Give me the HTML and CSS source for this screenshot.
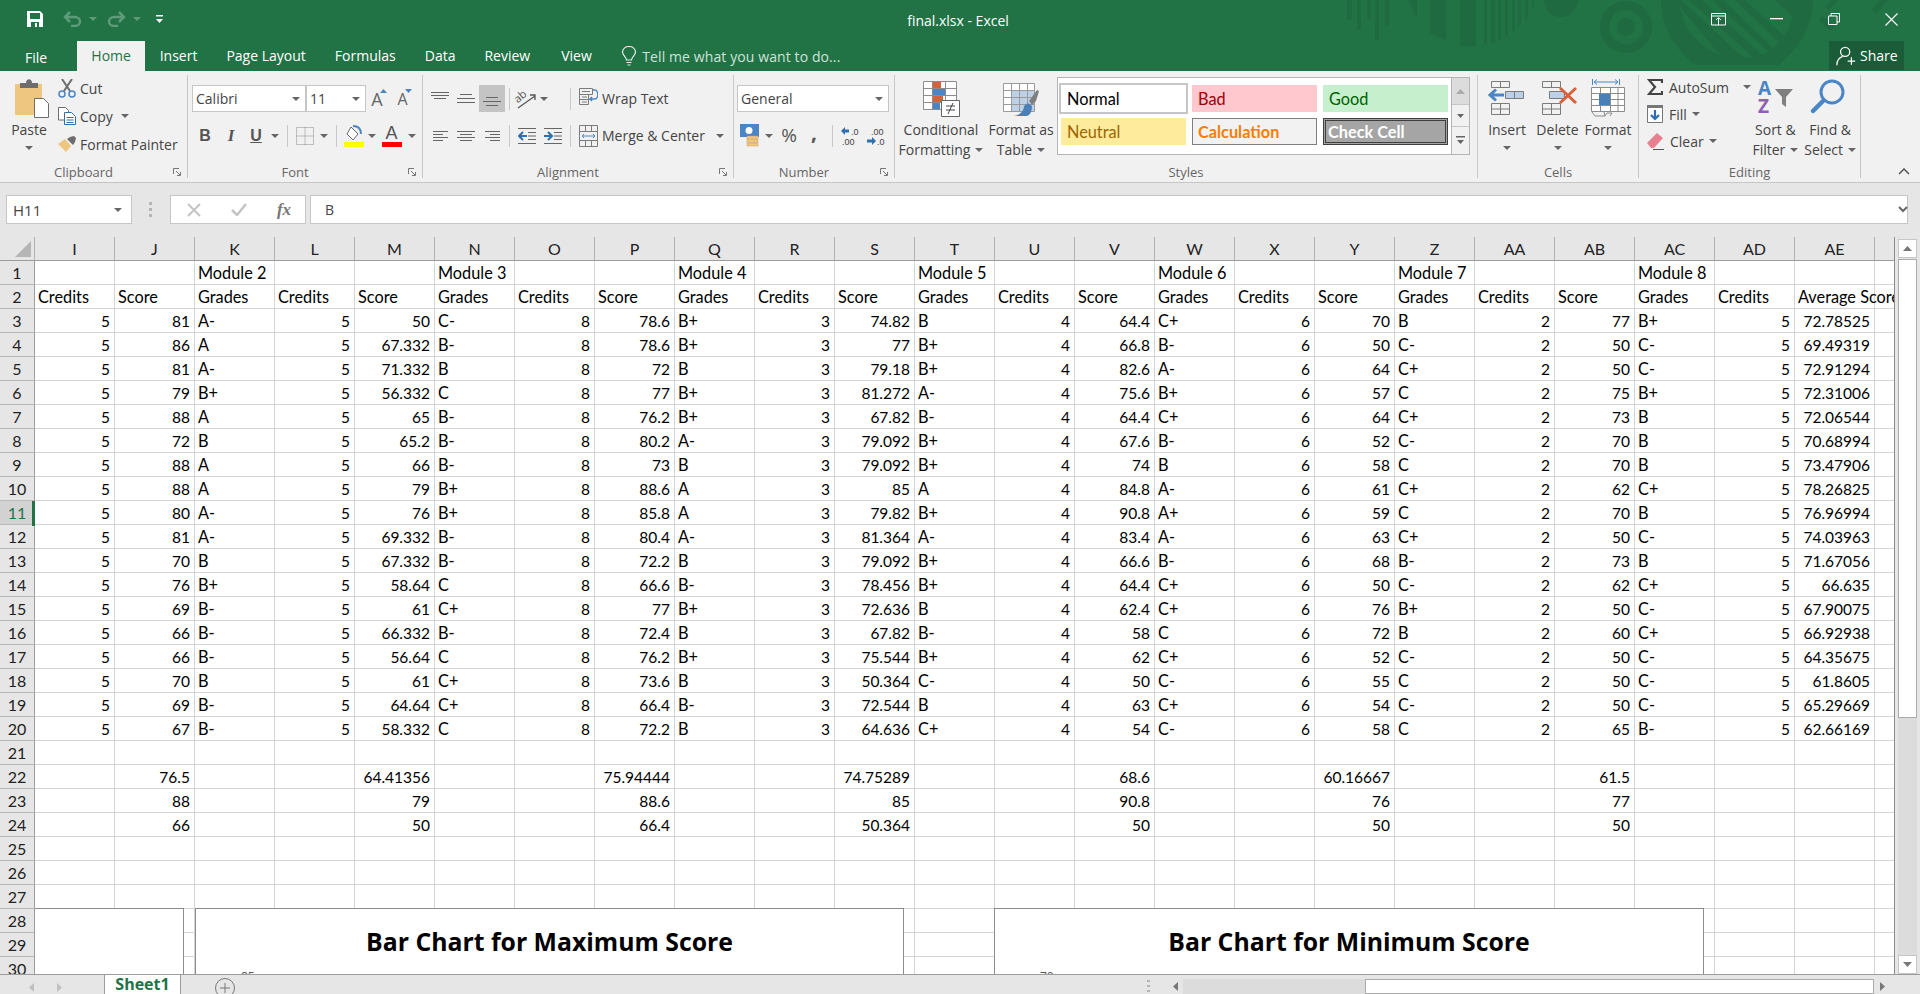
FILE: index.html
```html
<!DOCTYPE html>
<html lang="en">
<head>
    <meta charset="UTF-8">
    <title>final.xlsx - Excel</title>
    <link rel="stylesheet" href="styles.css">
</head>
<body>
<header class="titlebar">
    <svg class="pattern" width="560" height="65" viewBox="1340 0 560 65" fill="#1f6a40">
        <rect x="1347" y="0" width="5" height="20"/><rect x="1357" y="0" width="4" height="29"/>
        <rect x="1367" y="0" width="4" height="20"/><rect x="1375" y="0" width="4" height="40"/>
        <rect x="1385" y="0" width="4" height="26"/>
        <path d="M1408 0h9v17zM1430 0h16v41l-16-8zM1460 0h16v47l-16-1z"/>
        <path d="M1484 0h3v44l-3 1zM1491 0h4v42l-4 1zM1498 0h3v40l-3 1zM1505 0h3v36l-3 2zM1512 0h3v30l-3 3zM1518 0h3v25l-3 3zM1525 0h3v17l-3 4zM1532 0h2v7l-2 3z"/>
        <path d="M1544 0h34a17 17 0 0 1-34 0z"/>
        <path fill-rule="evenodd" d="M1626 1a26 26 0 1 0 .01 0zM1626 10a17 17 0 1 1-.01 0z"/>
        <circle cx="1626" cy="27" r="9"/>
        <path fill-rule="evenodd" d="M1661 0h152c0 28-16 50-34 65h-84c-18-15-34-37-34-65zM1680 7c3 22 20 40 40 48l-40-48zM1681 0l63 58 9-1-64-57zM1702 0l60 55 7-3-57-52zM1723 0l50 48 6-6-44-42zM1745 0l39 36c4-6 7-12 9-19l-18-17z"/>
        <path d="M1825 7l7-7h6l-9 10zM1822 16l-3 5 12 10 3-5zM1880 0h8l-12 14-4-4z"/>
    </svg>
    <div class="qat-row">
        <div class="qat">
            <svg width="16" height="16" viewBox="0 0 16 16"><path fill="#fff" d="M0 0h13l3 3v13H0z"/><rect x="3" y="2" width="10" height="6" fill="#217346"/><rect x="4" y="11" width="8" height="5" fill="#217346"/><rect x="8" y="12" width="2" height="4" fill="#fff"/></svg>
            <svg class="qat-undo" width="19" height="16" viewBox="0 0 19 16" fill="none" stroke="#5e9b79" stroke-width="2.5"><path d="M7 1L2 6l5 5M2 6h10a5 4.5 0 0 1 0 9H8"/></svg>
            <span class="caret caret-faded"></span>
            <svg class="qat-redo" width="19" height="16" viewBox="0 0 19 16" fill="none" stroke="#5e9b79" stroke-width="2.5"><path d="M12 1l5 5-5 5M17 6H7a5 4.5 0 0 0 0 9h4"/></svg>
            <span class="caret caret-faded"></span>
            <svg class="qat-more" width="7" height="9" viewBox="0 0 7 9" fill="#fff"><rect width="7" height="1.5"/><path d="M0 4h7L3.5 8z"/></svg>
        </div>
        <div class="doc-title">final.xlsx - Excel</div>
        <div class="win-controls">
            <span class="win-btn"><svg width="16" height="13" viewBox="0 0 16 13" fill="none" stroke="#fff"><path d="M.5 .5h14v11.5H.5zM.5 3h14M7.5 12V5M5 7l2.500-2.500L10 7"/></svg></span>
            <span class="win-btn"><svg width="13" height="2" viewBox="0 0 13 2"><rect width="13" height="1.300" fill="#fff"/></svg></span>
            <span class="win-btn"><svg width="12" height="12" viewBox="0 0 12 12" fill="none" stroke="#fff"><path d="M3 3V.5h8.500V9H9M.5 3h8.500v8.500H.5z"/></svg></span>
            <span class="win-btn"><svg width="13" height="13" viewBox="0 0 13 13" stroke="#fff" stroke-width="1.100"><path d="M.5 .5l12 12M12.500 .5l-12 12"/></svg></span>
        </div>
    </div>
    <nav class="tabs">
        <a class="tab tab-file">File</a>
        <a class="tab tab-on">Home</a>
        <a class="tab">Insert</a>
        <a class="tab">Page Layout</a>
        <a class="tab">Formulas</a>
        <a class="tab">Data</a>
        <a class="tab">Review</a>
        <a class="tab tab-view">View</a>
        <span class="tell">
            <svg width="16" height="20" viewBox="0 0 16 20" fill="none" stroke="#e6efe9" stroke-width="1.200"><path d="M5.500 14c0-3-4-4.500-4-8a6.500 5.500 0 0 1 13 0c0 3.500-4 5-4 8zM5.500 16.500h5M6.500 19h3"/></svg>
            Tell me what you want to do...
        </span>
        <span class="share">
            <svg width="20" height="20" viewBox="0 0 24 24" fill="none" stroke="#fff" stroke-width="1.500"><circle cx="11" cy="7" r="5.500"/><path d="M1 23c0-5 3-9 7-10.500M14 18h9M18.500 13.500v9"/></svg>
            Share
        </span>
    </nav>
</header>

<section class="ribbon">
    <div class="group g-clipboard">
        <div class="group-body">
            <div class="big-btn btn-paste">
                <svg class="big-ico" width="36" height="41" viewBox="0 0 36 41"><rect x="1" y="5" width="27" height="31" rx="1" fill="#efc67f"/><path fill="#6d6d6d" d="M6 9V4h6c0-5 6-5 6 0h6v5z"/><path fill="#fff" stroke="#6d6d6d" d="M20.500 19.500h9l5 5v14h-14z"/></svg>
                <span>Paste</span>
                <span class="caret caret-line"></span>
            </div>
            <div class="stack stack-clip">
                <div class="mini"><svg width="18" height="19" viewBox="0 0 18 19" fill="none"><path stroke="#6d6d6d" stroke-width="2" d="M4 0l8 12M14 0L6 12"/><circle cx="4" cy="15" r="3" stroke="#4a86c5" stroke-width="1.500"/><circle cx="14" cy="15" r="3" stroke="#4a86c5" stroke-width="1.500"/></svg>Cut</div>
                <div class="mini"><svg width="18" height="18" viewBox="0 0 18 18" fill="#fff" stroke="#6d6d6d"><path d="M.5 .5h7l3 3V13H.5z"/><path stroke="#2f6fad" d="M6.500 5.500h7l4 4v8h-11zM8.500 10.500h7M8.500 13h7M8.500 15.500h7"/></svg>Copy<span class="caret caret-copy"></span></div>
                <div class="mini"><svg width="18" height="16" viewBox="0 0 18 16"><path fill="#efc67f" d="M0 8l7-5 6 7-5 6z"/><path fill="#6d6d6d" d="M9 3l3-2 4-1 2 2-1 4-2 3z"/></svg>Format Painter</div>
            </div>
        </div>
        <div class="group-label"><span>Clipboard</span><svg class="launcher" width="8" height="8" viewBox="0 0 8 8" fill="none" stroke="#777"><path d="M.5 6V.5H6M3 3l4 4M7.500 4v3.500H4"/></svg></div>
    </div>

    <div class="group g-font">
        <div class="group-body rows">
            <div class="grid-row font-r1">
                <div class="combo combo-font">Calibri<span class="caret"></span></div>
                <div class="combo combo-size">11<span class="caret"></span></div>
                <span class="size-a">A<svg width="7" height="4" viewBox="0 0 7 4"><path fill="#4a86c5" d="M0 4l3.500-4L7 4z"/></svg></span>
                <span class="size-a size-small">A<svg width="7" height="4" viewBox="0 0 7 4"><path fill="#4a86c5" d="M0 0l3.500 4L7 0z"/></svg></span>
            </div>
            <div class="grid-row font-r2">
                <b class="fmt">B</b>
                <i class="fmt fmt-i">I</i>
                <u class="fmt">U</u>
                <span class="caret"></span>
                <span class="sep"></span>
                <svg width="18" height="18" viewBox="0 0 18 18" fill="none" stroke="#8a8a8a" stroke-dasharray="1 1"><path d="M.5 .5h17v17H.5zM9 .5v17M.5 9h17"/></svg>
                <span class="caret"></span>
                <span class="sep"></span>
                <svg width="20" height="22" viewBox="0 0 20 22"><path fill="#fff" stroke="#666" d="M7 2l7 7-5 6-6-6z"/><path fill="none" stroke="#4a86c5" stroke-width="2" d="M9 1c5 0 8 3 8 8"/><rect y="17" width="20" height="5" fill="#ff0"/></svg>
                <span class="caret"></span>
                <span class="color-a">A</span>
                <span class="caret"></span>
            </div>
        </div>
        <div class="group-label"><span>Font</span><svg class="launcher" width="8" height="8" viewBox="0 0 8 8" fill="none" stroke="#777"><path d="M.5 6V.5H6M3 3l4 4M7.500 4v3.500H4"/></svg></div>
    </div>

    <div class="group g-align">
        <div class="group-body rows">
            <div class="grid-row align-r1">
                <svg width="18" height="9" viewBox="0 0 18 9" stroke="#666" class="al-top"><path d="M0 1.500h18M0 4.500h18M3 7.500h12"/></svg>
                <svg width="18" height="12" viewBox="0 0 18 12" stroke="#666"><path d="M3 1.500h12M0 5.500h18M0 9.500h18"/></svg>
                <span class="al-on"><svg width="18" height="12" viewBox="0 0 18 12" stroke="#666"><path d="M3 1.500h12M0 5.500h18M3 9.500h12"/></svg></span>
                <span class="sep"></span>
                <svg width="22" height="20" viewBox="0 0 22 20" fill="none" stroke="#555"><text x="0" y="11" transform="rotate(-40 6 9)" class="ab">ab</text><path stroke-width="1.300" d="M3 19L20 7M15 6h5v5"/></svg>
                <span class="caret"></span>
                <span></span>
                <span class="sep"></span>
                <div class="mini mini-text"><svg width="19" height="22" viewBox="0 0 19 22" fill="none" stroke="#7b7b7b"><path d="M.5 .5h13v6H.5zM.5 6.500h9v5h-9zM.5 11.500h9v5h-9zM3 3.500h8M3 9h5M3 14h5"/><path stroke="#4a86c5" stroke-width="1.500" d="M14 2h2a2.500 4 0 0 1 0 9h-5l2-2M11 11l2 2"/></svg>Wrap Text</div>
            </div>
            <div class="grid-row align-r2">
                <svg width="15" height="12" viewBox="0 0 15 12" stroke="#666"><path d="M0 1.500h15M0 4.500h10M0 7.500h15M0 10.500h10"/></svg>
                <svg width="18" height="12" viewBox="0 0 18 12" stroke="#666"><path d="M0 1.500h18M3 4.500h12M0 7.500h18M3 10.500h12"/></svg>
                <svg width="15" height="12" viewBox="0 0 15 12" stroke="#666"><path d="M0 1.500h15M5 4.500h10M0 7.500h15M5 10.500h10"/></svg>
                <span class="sep"></span>
                <svg width="18" height="16" viewBox="0 0 18 16" fill="none" stroke="#666"><path d="M0 .5h18M10 4.500h8M10 8h8M10 11.500h8M0 15.500h18"/><path stroke="#2f6fad" stroke-width="2" d="M9 8H1M5 4L1 8l4 4"/></svg>
                <svg width="18" height="16" viewBox="0 0 18 16" fill="none" stroke="#666"><path d="M0 .5h18M10 4.500h8M10 8h8M10 11.500h8M0 15.500h18"/><path stroke="#2f6fad" stroke-width="2" d="M0 8h8M4 4l4 4-4 4"/></svg>
                <span class="sep"></span>
                <div class="mini mini-text"><svg width="19" height="22" viewBox="0 0 19 22" fill="none" stroke="#7b7b7b"><path d="M.5 .5h18v21H.5zM.5 6.500h18M.5 15.500h18M6.500 .5v6M12.500 .5v6M6.500 15.500v6M12.500 15.500v6"/><path stroke="#4a86c5" d="M3 11h13M5 9l-2 2 2 2M14 9l2 2-2 2"/></svg>Merge &amp; Center<span class="caret caret-merge"></span></div>
            </div>
        </div>
        <div class="group-label"><span>Alignment</span><svg class="launcher" width="8" height="8" viewBox="0 0 8 8" fill="none" stroke="#777"><path d="M.5 6V.5H6M3 3l4 4M7.500 4v3.500H4"/></svg></div>
    </div>

    <div class="group g-number">
        <div class="group-body rows">
            <div class="combo combo-num">General<span class="caret"></span></div>
            <div class="grid-row number-r2">
                <svg width="20" height="23" viewBox="0 0 20 23"><rect width="19" height="13" fill="#4a86c5"/><circle cx="9" cy="6.500" r="3.500" fill="#fff"/><g fill="#efc67f" stroke="#c9a063" stroke-width=".5"><rect x="7" y="12" width="11" height="3"/><rect x="7" y="15.500" width="11" height="3"/><rect x="7" y="19" width="11" height="3"/></g></svg>
                <span class="caret"></span>
                <span class="pct">%</span>
                <b class="comma">,</b>
                <span class="sep"></span>
                <svg width="20" height="20" viewBox="0 0 20 20"><path fill="#2f6fad" d="M1 5l4-4v2.500h4v3H5V9z"/><text x="11" y="9" class="dec">.0</text><text x="2" y="19" class="dec">.00</text></svg>
                <svg width="20" height="20" viewBox="0 0 20 20"><text x="5" y="9" class="dec">.00</text><path fill="#2f6fad" d="M10 15l-4 4v-2.500H1v-3h5V11z"/><text x="11" y="19" class="dec">.0</text></svg>
            </div>
        </div>
        <div class="group-label"><span>Number</span><svg class="launcher" width="8" height="8" viewBox="0 0 8 8" fill="none" stroke="#777"><path d="M.5 6V.5H6M3 3l4 4M7.500 4v3.500H4"/></svg></div>
    </div>

    <div class="group g-styles">
        <div class="group-body">
            <div class="big-btn btn-cond">
                <svg class="big-ico" width="40" height="41" viewBox="0 0 40 41"><path fill="#fff" stroke="#8c8c8c" d="M2.500 2.500h33v28h-33z"/><path fill="#d9603b" d="M12 3h8v7h-8zM12 17h10v7H12z"/><path fill="#4a86c5" d="M12 10h12v7H12zM12 24h7v6h-7z"/><path fill="none" stroke="#8c8c8c" d="M11.500 2.500v28M24.500 2.500v28M2.500 9.500h33M2.500 16.500h33M2.500 23.500h33"/><path fill="#fff" stroke="#666" d="M20.500 21.500h18v16h-18z"/><path fill="none" stroke="#444" d="M25 27h9M25 31h9M32 24l-5 11"/></svg>
                <span>Conditional</span>
                <span>Formatting<i class="caret caret-inline"></i></span>
            </div>
            <div class="big-btn btn-table">
                <svg class="big-ico" width="40" height="41" viewBox="0 0 40 41"><path fill="#fff" stroke="#9a9a9a" d="M2.500 4.500h31v28h-31z"/><path fill="#bcd0e8" d="M11 12h22v20H11z"/><path fill="none" stroke="#9a9a9a" d="M10.500 4.500v28M18.500 4.500v28M26.500 4.500v28M2.500 11.500h31M2.500 18.500h31M2.500 25.500h31"/><path fill="#7f7f7f" d="M28 22l8-11 2 1-3 10-4 4z"/><path fill="#4a7fb8" d="M27 24l4 3c0 5-2 10-6 10H13c6-1 10-5 10-10z"/></svg>
                <span>Format as</span>
                <span>Table<i class="caret caret-inline"></i></span>
            </div>
            <div class="gallery">
                <div class="gal-cells">
                    <div class="sty sty-normal">Normal</div>
                    <div class="sty sty-bad">Bad</div>
                    <div class="sty sty-good">Good</div>
                    <div class="sty sty-neutral">Neutral</div>
                    <div class="sty sty-calc">Calculation</div>
                    <div class="sty sty-check">Check Cell</div>
                </div>
                <div class="gal-scroll">
                    <span class="gal-up"><svg width="9" height="5" viewBox="0 0 9 5"><path fill="#aaa" d="M0 5l4.500-5L9 5z"/></svg></span>
                    <span class="gal-down"><svg width="7" height="4" viewBox="0 0 7 4"><path fill="#666" d="M0 0h7L3.500 4z"/></svg></span>
                    <span class="gal-more"><svg width="9" height="9" viewBox="0 0 9 9" fill="#666"><rect width="9" height="1.500"/><path d="M1 4h7L4.500 8z"/></svg></span>
                </div>
            </div>
        </div>
        <div class="group-label"><span>Styles</span></div>
    </div>

    <div class="group g-cells">
        <div class="group-body">
            <div class="big-btn btn-cell">
                <svg class="big-ico" width="40" height="41" viewBox="0 0 40 41" fill="none" stroke="#7b7b7b"><path d="M4.500 2.500h18v6h-18zM13.500 2.500v6M4.500 24.500h18v11h-18zM4.500 30h18M13.500 24.500v11"/><path fill="#bcd0e8" d="M18.500 12.500h18v7h-18zM27.500 12.500v7"/><path stroke="#4a86c5" stroke-width="3" d="M17 16H4M9 10.500L3 16l6 5.500"/></svg>
                <span>Insert</span>
                <span class="caret caret-line"></span>
            </div>
            <div class="big-btn btn-cell btn-cell-wide">
                <svg class="big-ico" width="40" height="41" viewBox="0 0 40 41" fill="none" stroke="#7b7b7b"><path d="M4.500 2.500h18v6h-18zM13.500 2.500v6M4.500 24.500h18v11h-18zM4.500 30h18M13.500 24.500v11"/><path fill="#bcd0e8" d="M11.500 12.500h15v7h-15z"/><path stroke="#d9603b" stroke-width="3" d="M22 9l16 15M38 9L22 24"/></svg>
                <span>Delete</span>
                <span class="caret caret-line"></span>
            </div>
            <div class="big-btn btn-cell">
                <svg class="big-ico" width="40" height="41" viewBox="0 0 40 41" fill="none"><path stroke="#4a86c5" d="M4.500 0v6M31.500 0v6M6 3h24M9 .5L6 3l3 2.500M27 .5L30 3l-3 2.500"/><path fill="#fff" stroke="#8c8c8c" d="M3.500 8.500h33v24h-33zM12.500 8.500v24M22.500 8.500v24M30 8.500v24M3.500 14.500h33M3.500 20.500h33M3.500 26.500h33"/><rect x="11" y="15" width="11" height="11" fill="#4a7fb8"/><path stroke="#8c8c8c" d="M4 33l3 4h10l2-3h5l-2 3M16 33l1 4"/></svg>
                <span>Format</span>
                <span class="caret caret-line"></span>
            </div>
        </div>
        <div class="group-label"><span>Cells</span></div>
    </div>

    <div class="group g-editing">
        <div class="group-body">
            <div class="stack stack-edit">
                <div class="mini"><svg width="16" height="16" viewBox="0 0 16 16" fill="none" stroke="#444" stroke-width="2.200"><path d="M15 4V1H2l6 7-6 7h13v-3"/></svg>AutoSum<span class="caret caret-sum"></span></div>
                <div class="mini"><svg width="16" height="18" viewBox="0 0 16 18" fill="#fff" stroke="#777"><path d="M.5 .5h15v17H.5z"/><path fill="#777" d="M.5 .5h15v2H.5z"/><path fill="none" stroke="#2f6fad" stroke-width="2.200" d="M8 5v9M4 10l4 4 4-4"/></svg>Fill<span class="caret caret-small"></span></div>
                <div class="mini"><svg width="17" height="18" viewBox="0 0 17 18"><path fill="#e8808f" d="M0 11L10 1l6 5L7 16H4z"/><path stroke="#555" d="M6 17.500h11"/></svg>Clear<span class="caret caret-small"></span></div>
            </div>
            <div class="big-btn btn-sort">
                <svg class="big-ico" width="40" height="41" viewBox="0 0 40 41"><text x="3" y="16" class="az az-a">A</text><text x="3" y="34" class="az az-z">Z</text><path fill="#7f7f7f" d="M20 10h18l-7 8v10l-4-3v-7z"/></svg>
                <span>Sort &amp;</span>
                <span>Filter<i class="caret caret-inline"></i></span>
            </div>
            <div class="big-btn btn-find">
                <svg class="big-ico" width="40" height="41" viewBox="0 0 40 41" fill="none" stroke="#4a86c5"><circle cx="25" cy="13" r="11" stroke-width="3"/><path stroke-width="4.500" stroke-linecap="round" d="M16 22L6 32"/></svg>
                <span>Find &amp;</span>
                <span>Select<i class="caret caret-inline"></i></span>
            </div>
        </div>
        <div class="group-label"><span>Editing</span></div>
    </div>

    <svg class="collapse" width="12" height="7" viewBox="0 0 12 7" fill="none" stroke="#555" stroke-width="1.500"><path d="M1 6l5-5 5 5"/></svg>
</section>

<section class="formula-bar">
    <div class="name-box">H11<span class="caret"></span></div>
    <div class="grip"></div>
    <div class="fx-box">
        <svg width="14" height="14" viewBox="0 0 14 14" stroke="#c4c4c4" stroke-width="2"><path d="M1 1l12 12M13 1L1 13"/></svg>
        <svg width="16" height="13" viewBox="0 0 16 13" fill="none" stroke="#c4c4c4" stroke-width="2.500"><path d="M1 7l5 5L15 1"/></svg>
        <span class="fx">fx</span>
    </div>
    <div class="formula-input">B</div>
    <svg class="formula-more" width="10" height="7" viewBox="0 0 10 7" fill="none" stroke="#666" stroke-width="2"><path d="M1 1l4 4 4-4"/></svg>
</section>

<main class="sheet-area">
    <div class="sheet">
        <div class="cells" id="cells"></div>
        <div class="chart chart-a"></div>
        <div class="chart chart-b">
            <div class="chart-title">Bar Chart for Maximum Score</div>
            <div class="chart-tick">85</div>
        </div>
        <div class="chart chart-c">
            <div class="chart-title">Bar Chart for Minimum Score</div>
            <div class="chart-tick">70</div>
        </div>
    </div>
    <div class="vscroll">
        <span class="sb-btn"><svg width="9" height="5" viewBox="0 0 9 5"><path fill="#777" d="M0 5l4.500-5L9 5z"/></svg></span>
        <span class="v-thumb"></span>
        <span class="v-rest"></span>
        <span class="sb-btn"><svg width="9" height="5" viewBox="0 0 9 5"><path fill="#777" d="M0 0h9L4.500 5z"/></svg></span>
    </div>
</main>

<footer class="statusbar">
    <svg class="nav-l" width="5" height="9" viewBox="0 0 5 9"><path fill="#c0c0c0" d="M5 0v9L0 4.500z"/></svg>
    <svg class="nav-r" width="5" height="9" viewBox="0 0 5 9"><path fill="#c0c0c0" d="M0 0v9l5-4.500z"/></svg>
    <div class="sheet-tab">Sheet1</div>
    <svg class="add-sheet" width="20" height="20" viewBox="0 0 20 20" fill="none" stroke="#777"><circle cx="10" cy="10" r="9.500"/><path d="M10 5v10M5 10h10"/></svg>
    <div class="h-grip"></div>
    <div class="hscroll">
        <span class="h-btn"><svg width="5" height="9" viewBox="0 0 5 9"><path fill="#777" d="M5 0v9L0 4.500z"/></svg></span>
        <span class="h-rest"></span>
        <span class="h-thumb"></span>
        <span class="h-btn"><svg width="5" height="9" viewBox="0 0 5 9"><path fill="#777" d="M0 0v9l5-4.500z"/></svg></span>
    </div>
</footer>
<script src="script.js"></script>
</body>
</html>
```

FILE: styles.css
```css
*{
    margin: 0;
    padding: 0;
    box-sizing: border-box;
}
html,body{
    width: 1920px;
    height: 994px;
    overflow: hidden;
}
body{
    display: flex;
    flex-direction: column;
    background: #e6e6e6;
    font-family: "Open Sans", "Liberation Sans", sans-serif;
    font-size: 14px;
    color: #444;
}
svg{
    display: block;
    flex: none;
}

/* title bar */
.titlebar{
    position: relative;
    height: 71px;
    flex: none;
    background: #217346;
    color: #fff;
}
.pattern{
    position: absolute;
    left: 1340px;
    top: 0;
}
.qat-row{
    position: relative;
    display: grid;
    grid-template-columns: 1fr auto 1fr;
    height: 41px;
}
.qat{
    display: flex;
    align-items: center;
    padding: 0 0 3px 27px;
}
.qat-undo{
    margin-left: 20px;
}
.qat-redo{
    margin-left: 10px;
}
.caret-faded{
    margin-left: 7px;
    border-top-color: #5e9b79 !important;
}
.qat-more{
    margin-left: 15px;
}
.doc-title{
    line-height: 41px;
    margin-left: -4px;
    font-size: 14px;
}
.win-controls{
    display: flex;
    justify-content: flex-end;
}
.win-btn{
    width: 57.5px;
    height: 38px;
    display: flex;
    align-items: center;
    justify-content: center;
}
.tabs{
    position: relative;
    display: flex;
    height: 30px;
    align-items: stretch;
}
.tab{
    padding: 0 14.5px;
    line-height: 30px;
}
.tab-file{
    padding: 2px 30px 0 25px;
}
.tab-on{
    width: 68px;
    padding: 0;
    text-align: center;
    background: #f1f1f1;
    color: #217346;
}
.tab-view{
    padding-left: 16.5px;
}
.tell{
    display: flex;
    align-items: center;
    gap: 5px;
    margin-left: 15px;
    color: #d0e2d8;
    letter-spacing: .1px;
}
.share{
    display: flex;
    align-items: center;
    gap: 4px;
    width: 75px;
    height: 29px;
    margin-left: auto;
    margin-right: 16px;
    padding-left: 7px;
    background: #1a5c38;
}

/* ribbon */
.ribbon{
    display: flex;
    height: 112px;
    flex: none;
    padding-top: 4px;
    background: #f1f1f1;
    border-bottom: 1px solid #c6c6c6;
}
.group{
    display: flex;
    flex-direction: column;
    height: 103px;
    border-right: 1px solid #c8c8c8;
}
.g-clipboard{ width: 188px; }
.g-font{ width: 235px; }
.g-align{ width: 311px; }
.g-number{ width: 161px; }
.g-styles{ width: 583px; }
.g-cells{ width: 161px; }
.g-editing{ width: 222px; }
.group-body{
    display: flex;
    height: 86px;
    flex: none;
}
.group-label{
    display: flex;
    height: 17px;
    line-height: 22px;
    font-size: 13px;
    color: #666;
}
.group-label span{
    flex: 1;
    text-align: center;
}
.launcher{
    margin: 7px 6px 0 6px;
}
.caret{
    display: inline-block;
    flex: none;
    width: 0;
    height: 0;
    border-left: 4px solid transparent;
    border-right: 4px solid transparent;
    border-top: 4px solid #666;
    justify-self: center;
}
.caret-line{
    margin-top: 6px;
}
.caret-inline{
    margin-left: 5px;
    vertical-align: 3px;
}
.big-btn{
    display: flex;
    flex-direction: column;
    align-items: center;
    padding-top: 4px;
    line-height: 20px;
    white-space: nowrap;
}
.big-ico{
    height: 41px;
}
.btn-paste{
    width: 58px;
}
.btn-paste .big-ico{
    margin-left: 6px;
}
.stack{
    display: flex;
    flex-direction: column;
}
.stack-clip{
    margin-top: -1px;
}
.stack-clip .mini{
    gap: 4px;
}
.mini{
    display: flex;
    align-items: center;
    gap: 6px;
    height: 28px;
    white-space: nowrap;
}
.caret-copy{
    margin-left: 4px;
}
.stack-edit{
    width: 106px;
    margin: -1.5px 0 0 8px;
}
.stack-edit .mini{
    height: 27px;
}
.caret-sum{
    margin-left: 8px;
}
.caret-small{
    margin-left: -1px;
}

.rows{
    flex-direction: column;
    padding: 10px 0 0 4px;
    gap: 12px;
}
.grid-row{
    display: grid;
    align-items: center;
    justify-items: center;
}
.font-r1{
    grid-template-columns: 114px 60px 26px 25px;
    height: 27px;
}
.font-r2{
    grid-template-columns: 26px 26px 24px 14px 11px 24px 14px 10px 25px 12px 27px 13px;
    height: 23px;
}
.combo{
    display: flex;
    align-items: center;
    justify-content: space-between;
    width: 100%;
    height: 27px;
    padding: 0 5px 0 3px;
    background: #fff;
    border: 1px solid #c6c6c6;
}
.size-a{
    display: flex;
    align-items: flex-start;
    font-size: 18px;
    line-height: 24px;
    color: #666;
}
.size-small{
    font-size: 16px;
}
.size-a svg{
    margin-top: 2px;
    margin-left: -3px;
}
.fmt{
    font-family: "Liberation Sans", sans-serif;
    font-size: 16px;
    font-weight: bold;
    color: #555;
}
.fmt-i{
    font-family: "Liberation Serif", serif;
    font-size: 17px;
}
.sep{
    display: block;
    width: 1px;
    height: 22px;
    background: #c8c8c8;
}
.color-a{
    display: block;
    width: 20px;
    height: 23px;
    font-family: "Liberation Sans", sans-serif;
    font-size: 18px;
    line-height: 18px;
    text-align: center;
    color: #555;
    border-bottom: 5px solid #f00;
}
.align-r1{
    grid-template-columns: 26px 26px 26px 8px 26px 10px 16px 10px auto;
    height: 27px;
}
.align-r2{
    grid-template-columns: 26px 26px 26px 8px 28px 24px 10px auto;
    height: 23px;
}
.al-top{
    margin-bottom: 7px;
}
.al-on{
    display: flex;
    align-items: center;
    justify-content: center;
    width: 26px;
    height: 27px;
    padding-top: 6px;
    background: #c4c4c4;
}
.ab{
    font-family: "Open Sans", sans-serif;
    font-size: 11px;
    fill: #555;
    stroke: none;
}
.mini-text{
    gap: 4px;
    height: 23px;
    margin-left: 4px;
    justify-self: start;
}
.caret-merge{
    margin-left: 7px;
}
.g-number .rows{
    padding-left: 3px;
}
.combo-num{
    width: 152px;
}
.number-r2{
    grid-template-columns: 25px 14px 26px 24px 12px 24px 27px;
    width: 152px;
    height: 23px;
}
.pct{
    font-size: 19px;
    line-height: 23px;
    color: #555;
}
.comma{
    margin-bottom: 8px;
    font-size: 21px;
    line-height: 14px;
    color: #555;
}
.dec{
    font-family: "Liberation Sans", sans-serif;
    font-size: 9px;
    fill: #444;
}
.btn-cond{
    width: 82px;
    margin-left: 5px;
}
.btn-table{
    width: 66px;
    margin-left: 6px;
}
.gallery{
    display: flex;
    width: 413px;
    height: 78px;
    margin: 2px 0 0 3px;
    background: #fff;
    border: 1px solid #b5b5b5;
}
.gal-cells{
    display: grid;
    grid-template-columns: repeat(3, 125px);
    grid-auto-rows: 27px;
    gap: 6px;
    flex: 1;
    padding: 7px 0 0 3px;
}
.sty{
    padding-left: 6px;
    font-family: Lato, "Liberation Sans", sans-serif;
    font-size: 16.3px;
    line-height: 27px;
}
.sty-normal{
    color: #000;
    outline: 2px solid #c6c6c6;
}
.sty-bad{
    background: #ffc7ce;
    color: #9c0006;
}
.sty-good{
    background: #c6efce;
    color: #006100;
}
.sty-neutral{
    background: #ffeb9c;
    color: #9c6500;
}
.sty-calc{
    padding-left: 5px;
    background: #f2f2f2;
    border: 1px solid #7f7f7f;
    color: #fa7d00;
    font-weight: bold;
    line-height: 25px;
}
.sty-check{
    background: #a5a5a5;
    border: 3px double #3f3f3f;
    color: #fff;
    font-weight: bold;
    line-height: 21px;
    padding-left: 2px;
}
.gal-scroll{
    display: flex;
    flex-direction: column;
    width: 18px;
    background: #f1f1f1;
    border-left: 1px solid #b5b5b5;
}
.gal-scroll span{
    display: flex;
    align-items: center;
    justify-content: center;
}
.gal-up{
    height: 26px;
    background: #dcdcdc;
}
.gal-down{
    height: 23px;
    border-top: 1px solid #c6c6c6;
    border-bottom: 1px solid #c6c6c6;
}
.gal-more{
    flex: 1;
}
.btn-cell{
    width: 50px;
}
.g-cells .group-body{
    padding-left: 4px;
}
.btn-cell-wide{
    width: 51px;
}
.btn-sort{
    width: 46px;
}
.btn-find{
    width: 60px;
    margin-left: 2px;
}
.btn-find .big-ico{
    margin-left: -6px;
}
.az{
    font-family: "Open Sans", sans-serif;
    font-size: 19px;
    font-weight: bold;
}
.az-a{ fill: #4a86c5; }
.az-z{ fill: #8e5fb8; }
.collapse{
    margin: 93px 0 0 37px;
}

/* formula bar */
.formula-bar{
    display: flex;
    align-items: flex-start;
    height: 54px;
    flex: none;
    padding: 12px 0 0 6px;
}
.name-box{
    display: flex;
    align-items: center;
    justify-content: space-between;
    width: 126px;
    height: 29px;
    padding: 0 9px 0 6px;
    background: #fff;
    border: 1px solid #c6c6c6;
    font-size: 15px;
}
.grip{
    width: 3px;
    height: 15px;
    margin: 7px 18px 0 17px;
    background: repeating-linear-gradient(#b5b5b5 0 3px, transparent 3px 6px);
}
.fx-box{
    display: grid;
    grid-template-columns: 45px 46px 44px;
    justify-items: center;
    align-items: center;
    width: 136px;
    height: 29px;
    background: #fff;
    border: 1px solid #c6c6c6;
}
.fx{
    font-family: "Liberation Serif", serif;
    font-style: italic;
    font-weight: bold;
    font-size: 17px;
    color: #777;
}
.formula-input{
    width: 1598px;
    height: 29px;
    margin-left: 4px;
    padding-left: 14px;
    line-height: 27px;
    background: #fff;
    border: 1px solid #c6c6c6;
}
.formula-more{
    margin: 11px 0 0 -10px;
}

/* sheet */
.sheet-area{
    display: flex;
    height: 737px;
    flex: none;
}
.sheet{
    position: relative;
    width: 1895px;
    height: 737px;
    overflow: hidden;
    border-right: 1px solid #8c8c8c;
}
.cells{
    display: grid;
    grid-template-columns: 35px repeat(23, 80px) 20px;
    grid-template-rows: 24px repeat(30, 24px);
    font-family: Lato, "Liberation Sans", sans-serif;
    font-size: 16.3px;
    color: #000;
    background: #fff;
}
.cell{
    padding: 0 4px 0 3px;
    line-height: 24px;
    white-space: nowrap;
    border-right: 1px solid #d4d4d4;
    border-bottom: 1px solid #d4d4d4;
}
.num{
    text-align: right;
    font-size: 15.5px;
}
.col-head,.row-head,.corner{
    padding: 0;
    text-align: center;
    font-size: 16px;
    color: #222;
    background: #e6e6e6;
}
.col-head{
    border-right: 1px solid #b1b1b1;
    border-bottom: 1px solid #9c9c9c;
}
.row-head{
    border-right: 1px solid #9c9c9c;
    border-bottom: 1px solid #b9b9b9;
}
.corner{
    position: relative;
    border-right: 1px solid #b1b1b1;
    border-bottom: 1px solid #9c9c9c;
}
.corner::after{
    content: "";
    position: absolute;
    right: 3px;
    bottom: 3px;
    border-left: 16px solid transparent;
    border-bottom: 16px solid #b5b5b5;
}
.col-blank{
    background: #e6e6e6;
    border-right: 0;
    border-bottom: 1px solid #9c9c9c;
}
.row-on{
    position: relative;
    z-index: 2;
    background: #d2d2d2;
    color: #217346;
}
.row-on::after{
    content: "";
    position: absolute;
    right: -1px;
    top: 0;
    width: 3px;
    height: 25px;
    background: #217346;
}
.chart{
    position: absolute;
    top: 671px;
    height: 70px;
    background: #fff;
    border: 1px solid #8c8c8c;
    font-family: "Open Sans", sans-serif;
    color: #000;
}
.chart-a{
    left: 35px;
    width: 149px;
    border-left: 0;
}
.chart-b{
    left: 195px;
    width: 709px;
}
.chart-c{
    left: 994px;
    width: 710px;
}
.chart-title{
    height: 60px;
    padding-top: 13px;
    text-align: center;
    font-size: 24.8px;
    font-weight: bold;
    line-height: 38px;
}
.chart-tick{
    padding-left: 45px;
    font-size: 12px;
    line-height: 16px;
    color: #555;
}
.vscroll{
    display: flex;
    flex-direction: column;
    width: 25px;
    height: 737px;
    padding: 2px 3px 0 3px;
}
.sb-btn{
    display: flex;
    align-items: center;
    justify-content: center;
    height: 19px;
    flex: none;
    background: #fff;
    border: 1px solid #c6c6c6;
}
.v-thumb{
    height: 459px;
    flex: none;
    margin-top: 1px;
    background: #fff;
    border: 1px solid #ababab;
}
.v-rest{
    flex: 1;
    background: #dcdcdc;
}

/* sheet tabs and bottom scroll */
.statusbar{
    display: flex;
    align-items: flex-start;
    height: 20px;
    flex: none;
    border-top: 1px solid #9c9c9c;
    overflow: hidden;
}
.nav-l{
    margin: 8px 0 0 29px;
}
.nav-r{
    margin: 8px 0 0 23px;
}
.sheet-tab{
    width: 77px;
    height: 19px;
    margin-left: 42px;
    line-height: 19px;
    text-align: center;
    background: #fff;
    border-left: 1px solid #9c9c9c;
    border-right: 1px solid #9c9c9c;
    color: #217346;
    font-weight: bold;
    font-size: 16px;
}
.add-sheet{
    margin: 3px 0 0 34px;
}
.h-grip{
    width: 3px;
    height: 12px;
    margin: 5px 0 0 912px;
    background: repeating-linear-gradient(#b5b5b5 0 2px, transparent 2px 5px);
}
.hscroll{
    display: flex;
    width: 723px;
    height: 15px;
    margin: 4px 0 0 17px;
}
.h-btn{
    display: flex;
    align-items: center;
    justify-content: center;
    width: 16px;
    flex: none;
}
.h-rest{
    width: 182px;
    flex: none;
    background: #dcdcdc;
}
.h-thumb{
    flex: 1;
    background: #fff;
    border: 1px solid #ababab;
}
```

FILE: script.js
```js
var colNames = ['I','J','K','L','M','N','O','P','Q','R','S','T','U','V','W','X','Y','Z','AA','AB','AC','AD','AE'];
var rows = {
    1: ',,Module 2,,,Module 3,,,Module 4,,,Module 5,,,Module 6,,,Module 7,,,Module 8,,',
    2: 'Credits,Score,Grades,Credits,Score,Grades,Credits,Score,Grades,Credits,Score,Grades,Credits,Score,Grades,Credits,Score,Grades,Credits,Score,Grades,Credits,Average Score',
    3: '5,81,A-,5,50,C-,8,78.6,B+,3,74.82,B,4,64.4,C+,6,70,B,2,77,B+,5,72.78525',
    4: '5,86,A,5,67.332,B-,8,78.6,B+,3,77,B+,4,66.8,B-,6,50,C-,2,50,C-,5,69.49319',
    5: '5,81,A-,5,71.332,B,8,72,B,3,79.18,B+,4,82.6,A-,6,64,C+,2,50,C-,5,72.91294',
    6: '5,79,B+,5,56.332,C,8,77,B+,3,81.272,A-,4,75.6,B+,6,57,C,2,75,B+,5,72.31006',
    7: '5,88,A,5,65,B-,8,76.2,B+,3,67.82,B-,4,64.4,C+,6,64,C+,2,73,B,5,72.06544',
    8: '5,72,B,5,65.2,B-,8,80.2,A-,3,79.092,B+,4,67.6,B-,6,52,C-,2,70,B,5,70.68994',
    9: '5,88,A,5,66,B-,8,73,B,3,79.092,B+,4,74,B,6,58,C,2,70,B,5,73.47906',
    10: '5,88,A,5,79,B+,8,88.6,A,3,85,A,4,84.8,A-,6,61,C+,2,62,C+,5,78.26825',
    11: '5,80,A-,5,76,B+,8,85.8,A,3,79.82,B+,4,90.8,A+,6,59,C,2,70,B,5,76.96994',
    12: '5,81,A-,5,69.332,B-,8,80.4,A-,3,81.364,A-,4,83.4,A-,6,63,C+,2,50,C-,5,74.03963',
    13: '5,70,B,5,67.332,B-,8,72.2,B,3,79.092,B+,4,66.6,B-,6,68,B-,2,73,B,5,71.67056',
    14: '5,76,B+,5,58.64,C,8,66.6,B-,3,78.456,B+,4,64.4,C+,6,50,C-,2,62,C+,5,66.635',
    15: '5,69,B-,5,61,C+,8,77,B+,3,72.636,B,4,62.4,C+,6,76,B+,2,50,C-,5,67.90075',
    16: '5,66,B-,5,66.332,B-,8,72.4,B,3,67.82,B-,4,58,C,6,72,B,2,60,C+,5,66.92938',
    17: '5,66,B-,5,56.64,C,8,76.2,B+,3,75.544,B+,4,62,C+,6,52,C-,2,50,C-,5,64.35675',
    18: '5,70,B,5,61,C+,8,73.6,B,3,50.364,C-,4,50,C-,6,55,C,2,50,C-,5,61.8605',
    19: '5,69,B-,5,64.64,C+,8,66.4,B-,3,72.544,B,4,63,C+,6,54,C-,2,50,C-,5,65.29669',
    20: '5,67,B-,5,58.332,C,8,72.2,B,3,64.636,C+,4,54,C-,6,58,C,2,65,B-,5,62.66169',
    22: ',76.5,,,64.41356,,,75.94444,,,74.75289,,,68.6,,,60.16667,,,61.5,,,',
    23: ',88,,,79,,,88.6,,,85,,,90.8,,,76,,,77,,,',
    24: ',66,,,50,,,66.4,,,50.364,,,50,,,50,,,50,,,'
};
var oCells = document.getElementById('cells');

function addCell(text, className) {
    var oDiv = document.createElement('div');
    oDiv.className = className;
    oDiv.textContent = text;
    oCells.appendChild(oDiv);
}

addCell('', 'cell corner');
for (var c = 0; c < colNames.length; c++) {
    addCell(colNames[c], 'cell col-head');
}
addCell('', 'cell col-blank');

for (var r = 1; r <= 30; r++) {
    var aVal = rows[r] ? rows[r].split(',') : [];
    addCell(r, r == 11 ? 'cell row-head row-on' : 'cell row-head');
    for (var i = 0; i < 24; i++) {
        var val = aVal[i] || '';
        addCell(val, /^[\d.]+$/.test(val) ? 'cell num' : 'cell');
    }
}
```
